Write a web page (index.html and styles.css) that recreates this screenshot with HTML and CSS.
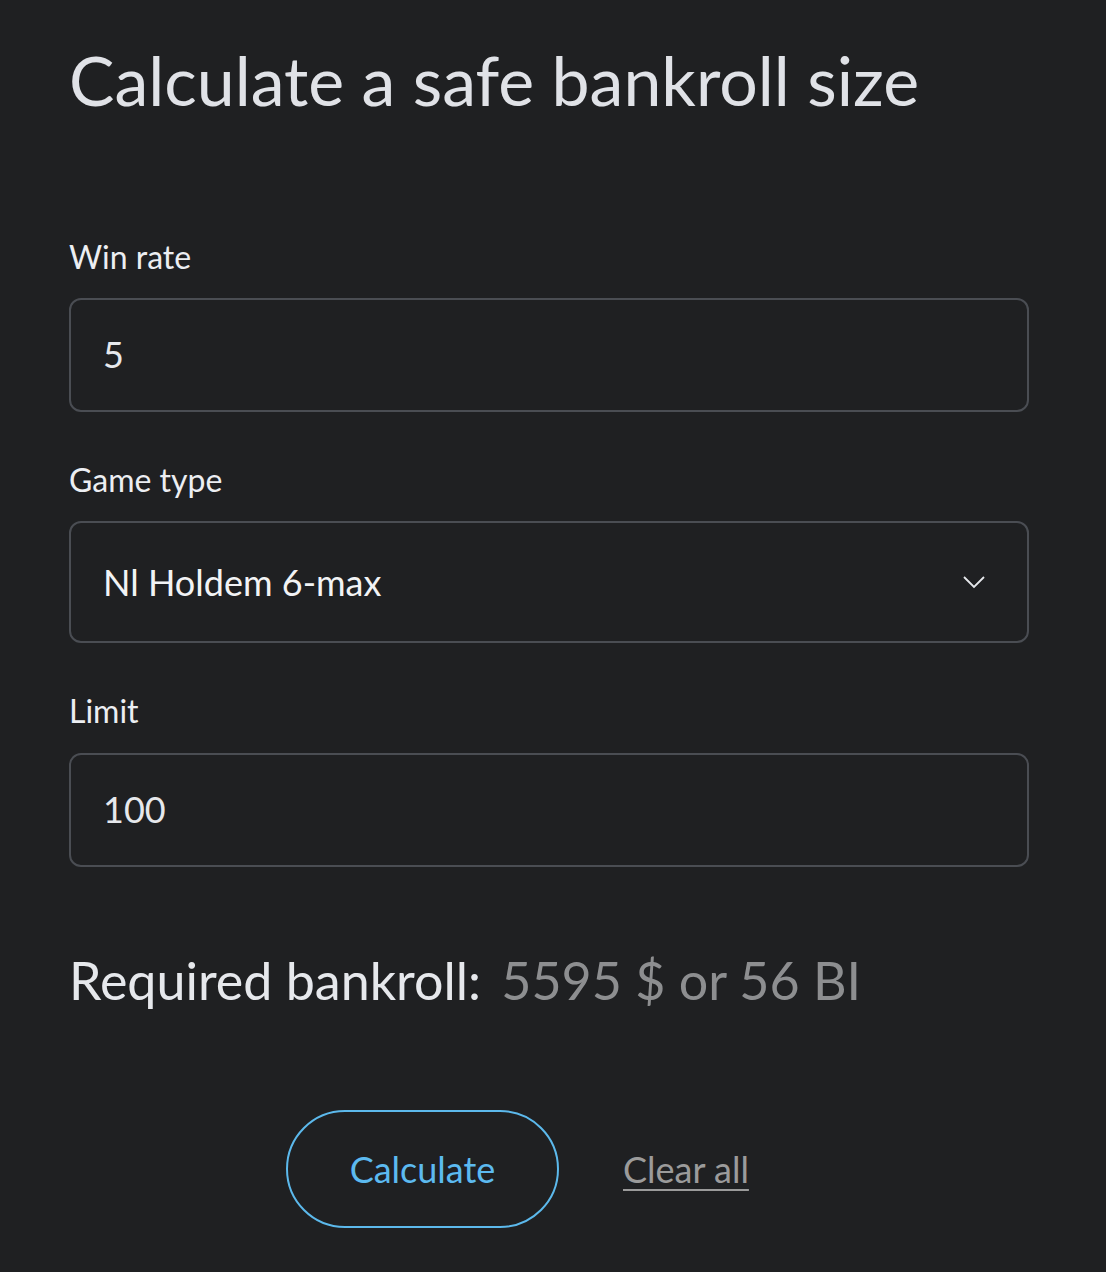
FILE: index.html
```html
<!DOCTYPE html>
<html lang="en">
<head>
<meta charset="utf-8">
<title>Bankroll calculator</title>
<link rel="stylesheet" href="styles.css">
</head>
<body>
<main class="page">
  <h1 class="title">Calculate a safe bankroll size</h1>
  <div class="field field-first">
    <label class="label">Win rate</label>
    <div class="input">5</div>
  </div>
  <div class="field">
    <label class="label">Game type</label>
    <div class="input select">
      <span class="select-text">Nl Holdem 6-max</span>
      <svg class="chevron" width="24" height="14" viewBox="0 0 24 14"><path d="M2 2 L12 12 L22 2" fill="none" stroke="#e6e8ec" stroke-width="1.8"/></svg>
    </div>
  </div>
  <div class="field">
    <label class="label">Limit</label>
    <div class="input">100</div>
  </div>
  <div class="result">
    <span class="result-label">Required bankroll:</span>
    <span class="result-value">5595 $ or 56 BI</span>
  </div>
  <div class="actions">
    <button class="btn">Calculate</button>
    <a class="clear" href="#">Clear all</a>
  </div>
</main>
</body>
</html>
```
FILE: styles.css
```css
html, body {
  margin: 0;
  padding: 0;
  background: #1f2022;
}
body {
  font-family: Lato, "Open Sans", sans-serif;
  color: #e6e8ec;
}
.page {
  padding: 39px 77px 40px 69px;
}
.title {
  margin: 0;
  font-size: 68px;
  font-weight: 400;
  line-height: 1.2;
  color: #e0e2e7;
}
.field {
  margin-top: 49px;
}
.field-first {
  margin-top: 117px;
}
.label {
  display: block;
  font-size: 32px;
  line-height: 1.2;
  color: #eceef2;
}
.input {
  margin-top: 22px;
  height: 114px;
  box-sizing: border-box;
  border: 2px solid #4a4d53;
  border-radius: 12px;
  padding: 0 32px;
  display: flex;
  align-items: center;
  font-size: 36px;
  line-height: 1.2;
  color: #e6e8ec;
}
.select {
  height: 122px;
  justify-content: space-between;
  padding-right: 41px;
}
.select-text {
  color: #f2f3f5;
}
.chevron {
  width: 24px;
  height: 14px;
}
.result {
  margin-top: 82px;
  font-size: 52px;
  line-height: 1.2;
  white-space: nowrap;
}
.result-label {
  color: #e6e8ec;
}
.result-value {
  color: #8d8e90;
  margin-left: 7px;
}
.actions {
  margin-top: 99px;
  padding-left: 217px;
  display: flex;
  align-items: center;
  gap: 64px;
}
.btn {
  width: 273px;
  height: 118px;
  box-sizing: border-box;
  border: 2px solid #5cb9ec;
  border-radius: 60px;
  background: transparent;
  color: #5cbaf0;
  font-family: Lato, "Open Sans", sans-serif;
  font-size: 36px;
  padding: 0;
}
.clear {
  color: #9b9b9b;
  font-size: 36px;
  text-decoration: underline;
  text-underline-offset: 6px;
  text-decoration-thickness: 2px;
}
```
